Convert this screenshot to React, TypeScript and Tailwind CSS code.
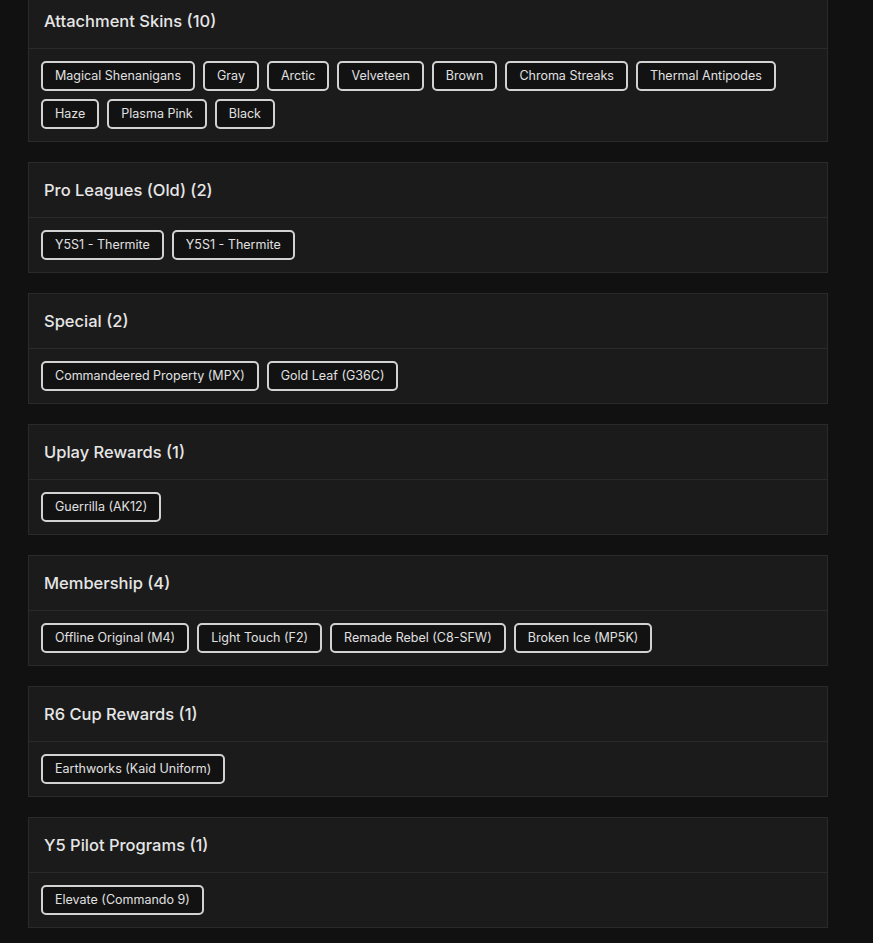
const sections: { title: string; items: string[] }[] = [
  {
    title: "Attachment Skins (10)",
    items: [
      "Magical Shenanigans",
      "Gray",
      "Arctic",
      "Velveteen",
      "Brown",
      "Chroma Streaks",
      "Thermal Antipodes",
      "Haze",
      "Plasma Pink",
      "Black",
    ],
  },
  { title: "Pro Leagues (Old) (2)", items: ["Y5S1 - Thermite", "Y5S1 - Thermite"] },
  { title: "Special (2)", items: ["Commandeered Property (MPX)", "Gold Leaf (G36C)"] },
  { title: "Uplay Rewards (1)", items: ["Guerrilla (AK12)"] },
  {
    title: "Membership (4)",
    items: ["Offline Original (M4)", "Light Touch (F2)", "Remade Rebel (C8-SFW)", "Broken Ice (MP5K)"],
  },
  { title: "R6 Cup Rewards (1)", items: ["Earthworks (Kaid Uniform)"] },
  { title: "Y5 Pilot Programs (1)", items: ["Elevate (Commando 9)"] },
];

const SkinCard = ({ title, items }: { title: string; items: string[] }) => {
  return (
    <div className="border border-[#2a2a2a] bg-[#1b1b1b]">
      <div className="h-[55px] flex items-center px-[15px] border-b border-[#2a2a2a]">
        <h2 className="text-[16.5px] font-medium text-[#e6e6e6]">{title}</h2>
      </div>
      <div className="flex flex-wrap gap-2 p-3">
        {items.map((item, i) => (
          <button
            key={i}
            className="h-[30px] px-3 flex items-center rounded-[5px] border-2 border-[#d2d2d2] bg-[#121212] text-[12.5px] text-[#e0e0e0]"
          >
            {item}
          </button>
        ))}
      </div>
    </div>
  );
};

const App = () => {
  return (
    <div
      className="min-h-screen bg-[#111111] overflow-hidden"
      style={{ fontFamily: "Inter, 'Noto Sans', sans-serif" }}
    >
      <div className="-mt-[7px] ml-[28px] w-[800px] flex flex-col gap-5 pb-10">
        {sections.map((s, i) => (
          <SkinCard key={i} title={s.title} items={s.items} />
        ))}
      </div>
    </div>
  );
};

export default App;
